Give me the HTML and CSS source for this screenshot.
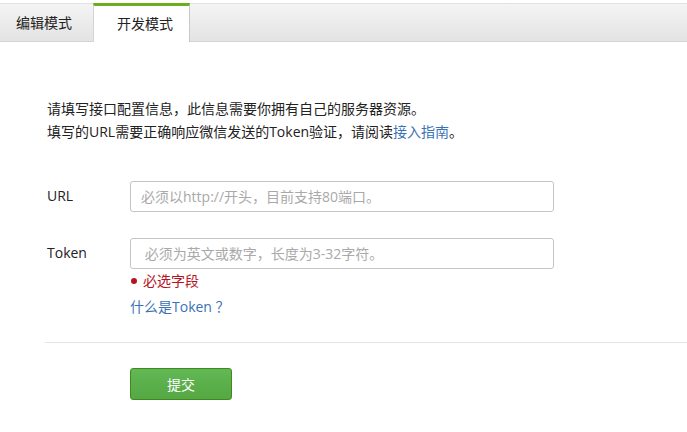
FILE: index.html
```html
<!DOCTYPE html>
<html>
<head>
    <meta charset="utf-8">
    <title>开发模式</title>
    <link rel="stylesheet" href="styles.css">
</head>
<body>
    <div class="tabs">
        <a class="tab">编辑模式</a>
        <a class="tab active">开发模式</a>
    </div>

    <div class="content">
        <p class="intro">
            请填写接口配置信息<span class="fw">，</span>此信息需要你拥有自己的服务器资源。<br>
            填写的URL需要正确响应微信发送的Token验证<span class="fw">，</span>请阅读<a href="#" class="link">接入指南</a>。
        </p>

        <div class="form">
            <div class="form-row">
                <label class="label">URL</label>
                <div class="field">
                    <input type="text" class="input" placeholder="必须以http://开头，目前支持80端口。">
                </div>
            </div>

            <div class="form-row">
                <label class="label">Token</label>
                <div class="field">
                    <input type="text" class="input" placeholder=" 必须为英文或数字，长度为3-32字符。">
                    <div class="error"><span class="dot"></span>必选字段</div>
                    <a href="#" class="link help">什么是Token <span class="fw">？</span></a>
                </div>
            </div>
        </div>

        <div class="actions">
            <button class="btn-submit">提交</button>
        </div>
    </div>
</body>
</html>
```

FILE: styles.css
```css
body {
    margin: 0;
    font-family: "Open Sans", "Noto Sans CJK SC", sans-serif;
    font-size: 14px;
    color: #222;
    background-color: #fff;
}

.fw {
    font-family: "Noto Sans CJK SC", sans-serif;
    display: inline-block;
    width: 1em;
    text-align: center;
}

/* Tab bar */
.tabs {
    display: flex;
    margin-top: 3px;
    height: 37px;
    border-top: 1px solid #e2e2e2;
    border-bottom: 1px solid #d4d4d4;
    background: linear-gradient(#f4f4f4, #e3e3e3);
}

.tab {
    display: block;
    width: 93px;
    box-sizing: border-box;
    padding-left: 16px;
    line-height: 37px;
    color: #222;
    cursor: pointer;
}

.tab.active {
    width: 97px;
    padding-left: 23px;
    margin-top: -1px;
    height: 39px;
    line-height: 35px;
    background-color: #fff;
    border-top: 3px solid #6dae1e;
    border-left: 1px solid #d4d4d4;
    border-right: 1px solid #c8c8c8;
}

.content {
    padding-left: 45px;
}

.intro {
    margin: 55px 0 0 2px;
    line-height: 23px;
}

.link {
    color: #3a72b5;
    text-decoration: none;
}

.form {
    margin-top: 38px;
}

.form-row {
    display: flex;
    margin-bottom: 26px;
}

.label {
    width: 83px;
    padding-left: 2px;
    line-height: 30px;
}

.input {
    width: 424px;
    height: 31px;
    box-sizing: border-box;
    padding: 0 10px;
    border: 1px solid #c4c4c4;
    border-radius: 3px;
    font-family: inherit;
    font-size: 14px;
    color: #222;
}

.input::placeholder {
    color: #a9a9a9;
}

.error {
    margin-top: 3px;
    line-height: 18px;
    color: #b4141c;
}

.dot {
    display: inline-block;
    width: 6px;
    height: 6px;
    margin: 0 6px 2px 1px;
    border-radius: 50%;
    background-color: #b4141c;
}

.help {
    display: block;
    margin-top: 7px;
    line-height: 18px;
}

.actions {
    padding: 25px 0 0 85px;
    border-top: 1px solid #e5e5e5;
}

.btn-submit {
    width: 102px;
    height: 32px;
    border: 1px solid #3f8a1d;
    border-radius: 3px;
    background: linear-gradient(#62b854, #55a844);
    color: #fff;
    font-family: inherit;
    font-size: 14px;
    cursor: pointer;
}
```
